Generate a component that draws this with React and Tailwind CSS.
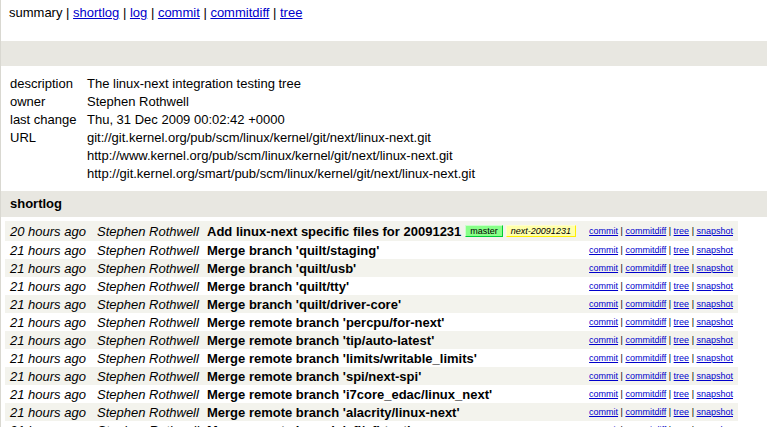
import React from "react";

const info = [
  ["description", "The linux-next integration testing tree"],
  ["owner", "Stephen Rothwell"],
  ["last change", "Thu, 31 Dec 2009 00:02:42 +0000"],
  ["URL", "git://git.kernel.org/pub/scm/linux/kernel/git/next/linux-next.git"],
  ["", "http://www.kernel.org/pub/scm/linux/kernel/git/next/linux-next.git"],
  ["", "http://git.kernel.org/smart/pub/scm/linux/kernel/git/next/linux-next.git"],
];

const commits = [
  { age: "20 hours ago", subject: "Add linux-next specific files for 20091231", refs: true },
  { age: "21 hours ago", subject: "Merge branch 'quilt/staging'" },
  { age: "21 hours ago", subject: "Merge branch 'quilt/usb'" },
  { age: "21 hours ago", subject: "Merge branch 'quilt/tty'" },
  { age: "21 hours ago", subject: "Merge branch 'quilt/driver-core'" },
  { age: "21 hours ago", subject: "Merge remote branch 'percpu/for-next'" },
  { age: "21 hours ago", subject: "Merge remote branch 'tip/auto-latest'" },
  { age: "21 hours ago", subject: "Merge remote branch 'limits/writable_limits'" },
  { age: "21 hours ago", subject: "Merge remote branch 'spi/next-spi'" },
  { age: "21 hours ago", subject: "Merge remote branch 'i7core_edac/linux_next'" },
  { age: "21 hours ago", subject: "Merge remote branch 'alacrity/linux-next'" },
  { age: "21 hours ago", subject: "Merge remote branch 'sfi/sfi-test'" },
];

const NavLink = ({ children }) => (
  <a href="#" className="text-[#0000cc] underline">
    {children}
  </a>
);

const App = () => {
  return (
    <div className="min-h-screen bg-white border-l border-[#d9d8d1] text-black text-[13px] font-['Liberation_Sans',Arial,sans-serif]">
      {/* page nav */}
      <div className="h-[41px] pl-[8px] pt-[5px] leading-[15px] whitespace-pre">
        summary{" | "}
        <NavLink>shortlog</NavLink>
        {" | "}
        <NavLink>log</NavLink>
        {" | "}
        <NavLink>commit</NavLink>
        {" | "}
        <NavLink>commitdiff</NavLink>
        {" | "}
        <NavLink>tree</NavLink>
      </div>

      <div className="h-[25px] bg-[#e8e7e1]" />

      {/* project info */}
      <div className="pt-[8px] pb-[9px] pl-[9px]">
        {info.map(([label, value], i) => (
          <div key={i} className="flex h-[18px] items-center leading-[15px]">
            <div className="w-[77px] shrink-0">{label}</div>
            <div>{value}</div>
          </div>
        ))}
      </div>

      <div className="h-[26px] bg-[#e8e7e1] pl-[9px] flex items-center font-bold">
        shortlog
      </div>

      {/* shortlog table */}
      <div className="pt-[4px] pl-[4px] w-[737px]">
        {commits.map((c, i) => (
          <div
            key={i}
            className={`grid grid-cols-[87px_110px_380px_1fr] items-center pl-[5px] pr-[5px] leading-[15px] ${
              c.refs ? "h-[20px]" : "h-[18px]"
            } ${i % 2 === 0 ? "bg-[#f3f3ed]" : "bg-white"}`}
          >
            <div className="italic whitespace-nowrap">{c.age}</div>
            <div className="italic whitespace-nowrap">Stephen Rothwell</div>
            <div className="flex items-center whitespace-nowrap">
              <span className="font-bold">{c.subject}</span>
              {c.refs && (
                <span className="flex items-center ml-[4px] gap-[3px]">
                  <span className="text-[9px] leading-[10px] px-[4px] border border-solid bg-[#88ff88] border-t-[#ccffcc] border-l-[#ccffcc] border-r-[#00cc33] border-b-[#00cc33]">
                    master
                  </span>
                  <span className="text-[9px] leading-[10px] px-[4px] italic border border-solid bg-[#ffffab] border-t-[#ffffcc] border-l-[#ffffcc] border-r-[#ffee00] border-b-[#ffee00]">
                    next-20091231
                  </span>
                </span>
              )}
            </div>
            <div className="text-[9px] whitespace-pre justify-self-end">
              <NavLink>commit</NavLink>
              {" | "}
              <NavLink>commitdiff</NavLink>
              {" | "}
              <NavLink>tree</NavLink>
              {" | "}
              <NavLink>snapshot</NavLink>
            </div>
          </div>
        ))}
      </div>
    </div>
  );
};

export default App;
